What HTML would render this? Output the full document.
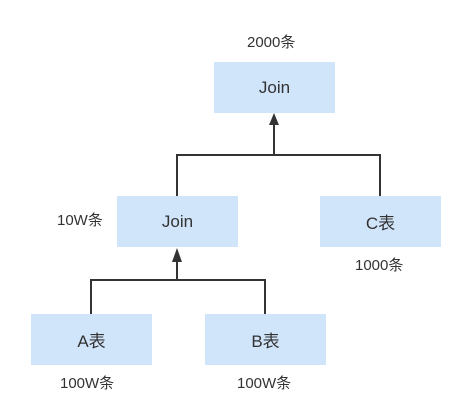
<!DOCTYPE html>
<html><head><meta charset="utf-8"><style>
body{margin:0;width:462px;height:412px;background:#fff;position:relative;overflow:hidden;font-family:"Liberation Sans","Noto Sans CJK SC",sans-serif;color:#333}
.b{position:absolute;width:121px;height:51px;background:#d0e4fa;display:flex;align-items:center;justify-content:center;font-size:17px}
.t{position:absolute;font-size:15px;line-height:16px}
svg{position:absolute;left:0;top:0}
</style></head><body>
<svg width="462" height="412">
<g stroke="#333" stroke-width="2" fill="none">
<path d="M177 196V155H380V196M274 155V124"/>
<path d="M91 314V280H265V314M177 280V262"/>
</g>
<path d="M274 113L269 125H279Z M177 248L172 262H182Z" fill="#333"/>
</svg>
<div class="b" style="left:214px;top:62px">Join</div>
<div class="b" style="left:117px;top:196px">Join</div>
<div class="b" style="left:320px;top:196px">C表</div>
<div class="b" style="left:31px;top:314px">A表</div>
<div class="b" style="left:205px;top:314px">B表</div>
<div class="t" style="left:247px;top:35px">2000条</div>
<div class="t" style="left:57px;top:213px">10W条</div>
<div class="t" style="left:355px;top:258px">1000条</div>
<div class="t" style="left:60px;top:376px">100W条</div>
<div class="t" style="left:237px;top:376px">100W条</div>
</body></html>
